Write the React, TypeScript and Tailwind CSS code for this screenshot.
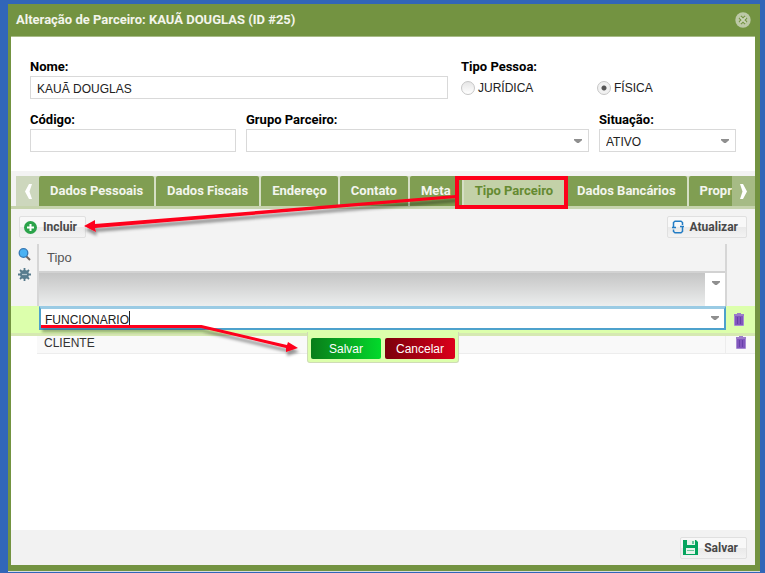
import type { ReactNode } from 'react';

const SANS = "font-['Liberation_Sans',Arial,sans-serif]";
const BOLD = "font-['Roboto',Arial,sans-serif] font-bold";

const tabs = ['Dados Pessoais', 'Dados Fiscais', 'Endereço', 'Contato', 'Meta', 'Tipo Parceiro', 'Dados Bancários', 'Propriedades'];

function Caret({ className = '' }: { className?: string }) {
  return (
    <svg aria-hidden="true" viewBox="0 0 8 5" className={`pointer-events-none h-[5px] w-2 ${className}`}>
      <path d="M0 0h8v1.2L4.8 4H3.2L0 1.2z" fill="#8f8f8f" />
    </svg>
  );
}

function Field({ id, label, className, children }: { id: string; label: string; className: string; children: ReactNode }) {
  return (
    <div className={className}>
      <label htmlFor={id} className={`${BOLD} block h-[19px] text-[13px] leading-[20px] text-black`}>{label}</label>
      {children}
    </div>
  );
}

const box = `${SANS} block h-[23px] w-full appearance-none rounded-none border border-[#d9d9d9] bg-white px-[6px] pt-[2px] text-[12px] text-[#222] outline-none`;

function SelectBox({ id, options }: { id: string; options: string[] }) {
  return (
    <div className="relative">
      <select id={id} className={box}>
        {options.map((o) => <option key={o}>{o}</option>)}
      </select>
      <Caret className="absolute top-[10px] right-[7px]" />
    </div>
  );
}

function Radio({ label, checked, className = '' }: { label: string; checked?: boolean; className?: string }) {
  return (
    <label className={`${SANS} flex h-[23px] items-center gap-[3px] text-[12px] text-[#222] ${className}`}>
      <input
        type="radio"
        name="pessoa"
        defaultChecked={checked}
        className="m-0 size-[14px] appearance-none rounded-full border border-[#c6c6c6] bg-linear-to-b from-[#e6e6e6] to-white checked:bg-[radial-gradient(circle,#555_0,#555_2px,#f1f1f1_3px)]"
      />
      {label}
    </label>
  );
}

function ToolButton({ icon, children, className = 'pr-2 pl-[4px]' }: { icon: ReactNode; children: ReactNode; className?: string }) {
  return (
    <button type="button" className={`${BOLD} flex h-[22px] items-center gap-[6px] rounded-[2px] border border-[#e0e0e0] bg-[linear-gradient(#f8f8f8_50%,#e9e9e9_50%,#f3f3f3)] text-[12px] text-[#484848] ${className}`}>
      {icon}
      {children}
    </button>
  );
}

function Trash() {
  return (
    <svg aria-hidden="true" viewBox="0 0 10 13" className="h-[13px] w-[10px]">
      <path d="M3 0h4v1h3v2H0V1h3z" fill="#9c7cca" />
      <path d="M1 3h8v9.5H1z" fill="#8257bd" />
      <path d="M3.500 4v7M6.500 4v7" stroke="#613aa3" strokeWidth=".8" />
      <path d="M.5 3v9.500h9V3" fill="none" stroke="#a78bd2" strokeWidth="1" />
    </svg>
  );
}

function Annotations() {
  return (
    <svg aria-hidden="true" viewBox="0 0 765 400" className="pointer-events-none absolute top-0 left-0 z-20 h-[400px] w-[765px]">
      <g filter="url(#shade)">
        <path d="M456 195V198L95 228L96 232L84 226L95 220V224z" fill="#fe001a" />
        <path d="M41 325H201.500L287 345L288 342L298 348L286 352L286 348L201 328H41z" fill="#fe001a" />
      </g>
      <rect x="457" y="178" width="109" height="29" fill="none" stroke="#fe001a" strokeWidth="4" />
      <defs>
        <filter id="shade" x="-10%" y="-10%" width="120%" height="150%">
          <feDropShadow dx="1" dy="4" stdDeviation="1.500" floodColor="#000" floodOpacity=".4" />
        </filter>
      </defs>
    </svg>
  );
}

export default function App() {
  return (
    <main className="relative flex min-h-screen flex-col overflow-hidden bg-[#3166b8] pt-1 pr-[5px] pb-[2px] pl-2">
      <section className="flex flex-1 flex-col border-r-[5px] border-b-[6px] border-l-[3px] border-[#739341] bg-white shadow-[0_1px_0_#d7dce0]">
        <header className="flex h-8 shrink-0 items-center justify-between bg-[#739341] pr-1 pl-[5px]">
          <h1 className={`${BOLD} text-[13px] text-[#f3f5ec]`}>Alteração de Parceiro: KAUÃ DOUGLAS (ID #25)</h1>
          <button type="button" aria-label="Fechar" className="size-4">
            <svg viewBox="0 0 16 16" className="size-4">
              <circle cx="8" cy="8" r="7.700" fill="#bdc9a7" />
              <path d="M5 5l6 6M11 5l-6 6" stroke="#739341" strokeWidth="4" />
              <path d="M5 5l6 6M11 5l-6 6" stroke="#cbd5b9" strokeWidth="1.800" />
            </svg>
          </button>
        </header>

        <form className="flex flex-col gap-[11px] border-t border-[#a8bb88] pt-5 pr-[19px] pb-[19px] pl-[19px]">
          <div className="flex gap-[13px]">
            <Field id="nome" label="Nome:" className="w-[418px]">
              <input id="nome" defaultValue="KAUÃ DOUGLAS" className={box} />
            </Field>
            <fieldset>
              <legend className={`${BOLD} h-[19px] text-[13px] leading-[20px] text-black`}>Tipo Pessoa:</legend>
              <div className="flex">
                <Radio label="JURÍDICA" className="w-[136px]" />
                <Radio label="FÍSICA" checked />
              </div>
            </fieldset>
          </div>
          <div className="flex gap-[10px]">
            <Field id="codigo" label="Código:" className="w-[206px]">
              <input id="codigo" className={box} />
            </Field>
            <Field id="grupo" label="Grupo Parceiro:" className="flex-1">
              <SelectBox id="grupo" options={['']} />
            </Field>
            <Field id="situacao" label="Situação:" className="w-[137px]">
              <SelectBox id="situacao" options={['ATIVO', 'INATIVO']} />
            </Field>
          </div>
        </form>

        <nav className="flex shrink-0 border-b-[3px] border-[#c6d3ad] bg-[#f3f3f3] pt-[5px] pl-[5px]">
          <button type="button" aria-label="Abas anteriores" className="flex h-[30px] w-[23px] items-center justify-center bg-[#cdd7bd]">
            <svg viewBox="0 0 8 15" className="h-[15px] w-2"><path d="M5 0h3L5.500 7.500 8 15H5L1 7.500z" fill="#fff" /></svg>
          </button>
          <div role="tablist" className="flex min-w-0 flex-1 gap-[2px] overflow-hidden bg-[#d5dfc4]">
            {tabs.map((t) => (
              <button
                key={t}
                type="button"
                role="tab"
                aria-selected={t === 'Tipo Parceiro'}
                className={`${BOLD} h-[30px] shrink-0 rounded-t-[2px] px-[11px] text-[13px] ${t === 'Tipo Parceiro' ? 'bg-[#c3d1a8] text-[#658a31]' : 'bg-[#809e52] text-[#f3f5ee]'}`}
              >
                {t}
              </button>
            ))}
          </div>
          <button type="button" aria-label="Próximas abas" className="flex h-[30px] w-[23px] items-center justify-center bg-[#a6bb85]">
            <svg viewBox="0 0 8 15" className="h-[15px] w-2"><path d="M3 0H0l2.500 7.500L0 15h3l4-7.500z" fill="#fff" /></svg>
          </button>
        </nav>

        <div className="flex shrink-0 justify-between bg-[#f3f3f3] px-2 pt-[7px] pb-[6px]">
          <ToolButton
            icon={
              <svg aria-hidden="true" viewBox="0 0 13 13" className="size-[13px]">
                <circle cx="6.500" cy="6.500" r="6.500" fill="#2ba34a" />
                <path d="M6.500 3v7M3 6.500h7" stroke="#fff" strokeWidth="2" />
              </svg>
            }
          >
            Incluir
          </ToolButton>
          <ToolButton
            icon={
              <svg aria-hidden="true" viewBox="0 0 12 14" className="h-[14px] w-3" fill="none" stroke="#237cc4" strokeWidth="1.500">
                <path d="M1.500 7.500V2.500L3 1.200H9l1.500 1.300V5M10.500 6.500v5L9 12.800H3L1.500 11.500V9.500" />
                <path d="M0 7.500h4M8 6.500h4" />
              </svg>
            }
          >
            Atualizar
          </ToolButton>
        </div>

        <div className="flex shrink-0">
          <aside className="flex w-[26px] flex-col items-center gap-[7px] bg-[#f3f3f3] pt-[4px]">
            <button type="button" aria-label="Pesquisar">
              <svg viewBox="0 0 13 13" className="block size-[13px]">
                <path d="M8 8l4 4" stroke="#70655f" strokeWidth="2" />
                <circle cx="5.500" cy="5" r="4.300" fill="#4bb2f3" stroke="#3578b5" strokeWidth="1.300" />
              </svg>
            </button>
            <button type="button" aria-label="Configurar">
              <svg viewBox="0 0 13 13" className="block size-[13px]">
                <path d="M6.500 0v13M0 6.500h13M2 2l9 9M11 2l-9 9" stroke="#55798b" strokeWidth="1.800" />
                <circle cx="6.500" cy="6.500" r="4.500" fill="#587c8e" />
                <path d="M4 6.500h5" stroke="#b5c6ce" strokeWidth="1.200" />
              </svg>
            </button>
          </aside>
          <div className="min-w-0 flex-1 border-x-2 border-[#d6d6d6]">
            <div className={`${SANS} flex h-[27px] items-center bg-[#f3f3f3] pt-px pl-2 text-[13px] text-[#555]`}>Tipo</div>
            <div className="flex h-[35px] border-t-2 border-[#d2d2d2]">
              <div className="flex-1 bg-linear-to-b from-[#c5c5c5] to-[#eceeee]" />
              <button type="button" aria-label="Filtrar tipo" className="flex w-5 justify-center bg-white pt-2 pl-[2px]"><Caret /></button>
            </div>
          </div>
          <div className="w-[28px] bg-[#f3f3f3]" />
        </div>

        <div className="relative flex h-[30px] shrink-0 border-b-[3px] border-[#d6e9b1] bg-[#dcffac] pl-7">
          <div className="relative h-6 flex-1">
            <input
              aria-label="Tipo do parceiro"
              defaultValue="FUNCIONARIO"
              className={`${SANS} block h-6 w-full border-2 border-t-[3px] border-[#4da1cc] border-t-[#9acbe4] bg-white px-1 pt-[2px] text-[12px] text-[#222] outline-none`}
            />
            <span className="absolute top-[5px] left-[90px] h-[14px] w-px bg-[#222]" />
            <Caret className="absolute top-[10px] right-[7px]" />
          </div>
          <button type="button" aria-label="Excluir FUNCIONARIO" className="w-[29px] pl-2"><Trash /></button>
          <div className="absolute top-[26px] left-[296px] z-10 flex gap-1 rounded-b-[3px] border-x border-b border-[#cfdcb6] bg-[#dcffac] px-[3px] pt-[6px] pb-[3px]">
            <button type="button" className={`${SANS} h-[21px] w-[70px] rounded-[2px] bg-linear-to-r from-[#087d1a] to-[#02da2b] text-[12px] font-medium text-white`}>Salvar</button>
            <button type="button" className={`${SANS} h-[21px] w-[70px] rounded-[2px] bg-linear-to-r from-[#7b000b] to-[#dd001b] text-[12px] font-medium text-white`}>Cancelar</button>
          </div>
        </div>

        <div className="ml-[26px] flex h-[18px] shrink-0 border-b border-[#ededed] bg-[#f9f9f9]">
          <div className={`${SANS} flex flex-1 items-start border-r border-[#ededed] pl-[7px] text-[12px] leading-[14px] text-[#333]`}>CLIENTE</div>
          <button type="button" aria-label="Excluir CLIENTE" className="flex w-[29px] items-start pl-[10px]"><Trash /></button>
        </div>

        <div className="flex-1" />

        <footer className="flex h-[35px] shrink-0 items-center justify-end bg-[#f2f2f2] pr-2">
          <ToolButton
            className="pr-[8px] pl-[2px]"
            icon={
              <svg aria-hidden="true" viewBox="0 0 15 15" className="size-[15px]">
                <path d="M0 0h13l2 2v13H0z" fill="#04a45d" />
                <path d="M4 0h8v5H4zM3 8h9v6H3z" fill="#e8f4ec" />
                <path d="M9 1h2v3H9zM4 10h7v1H4z" fill="#6cc79c" />
              </svg>
            }
          >
            Salvar
          </ToolButton>
        </footer>
      </section>
      <Annotations />
    </main>
  );
}
